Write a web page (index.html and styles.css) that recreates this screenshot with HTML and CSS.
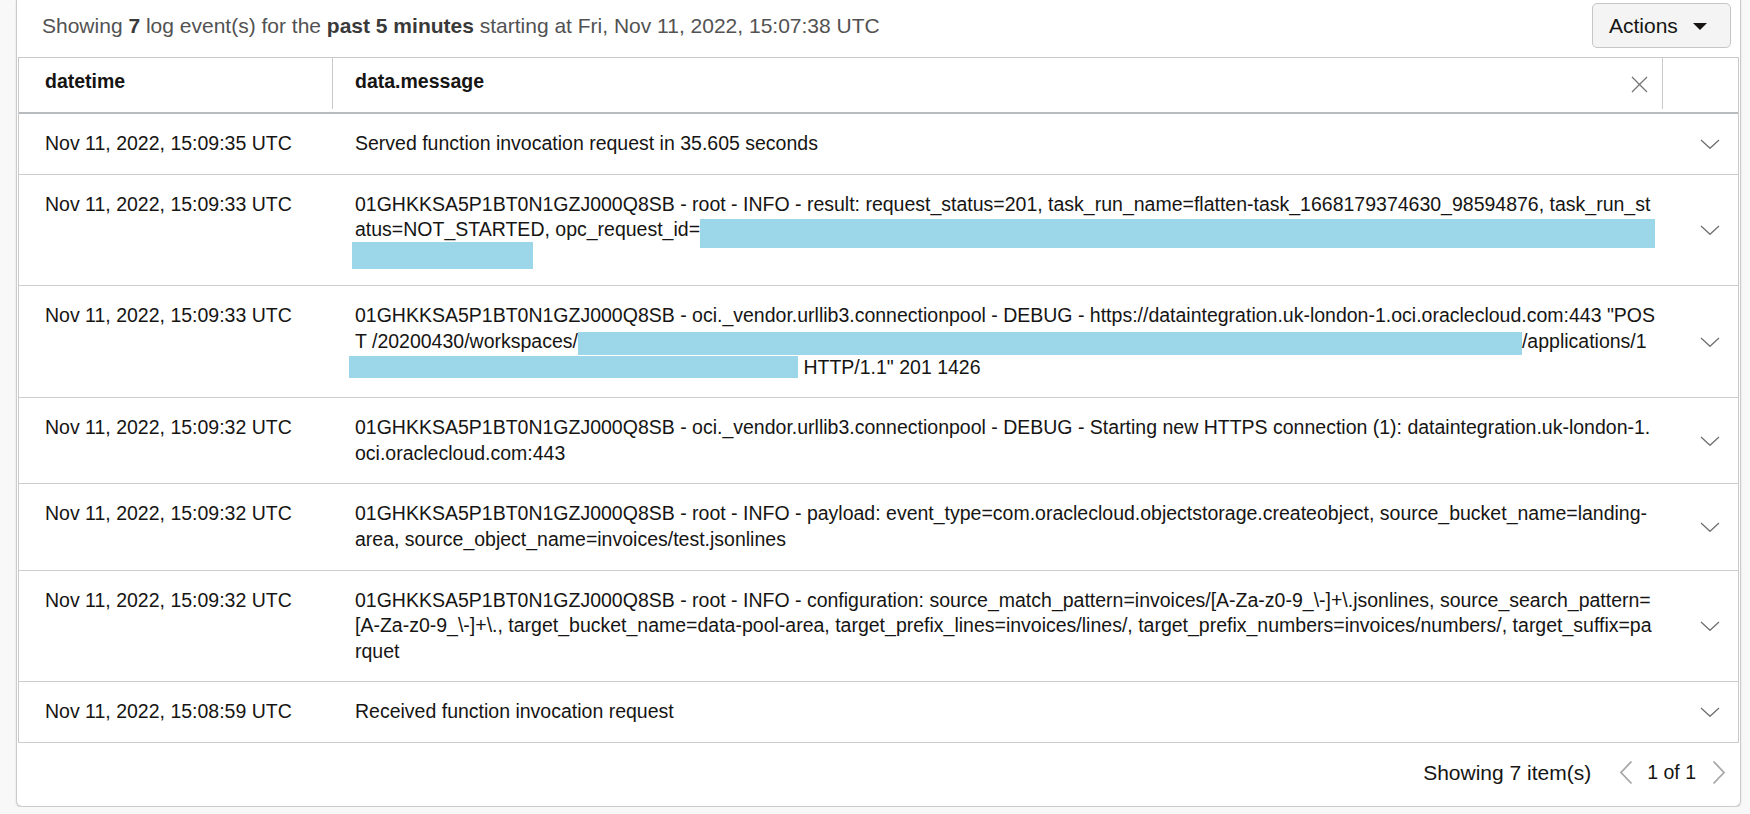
FILE: index.html
```html
<!DOCTYPE html>
<html lang="en">
<head>
<meta charset="utf-8">
<title>Log events</title>
<link rel="stylesheet" href="styles.css">
</head>
<body>
<div class="panel">
  <div class="toolbar">
    <p class="summary">Showing <b>7</b> log event(s) for the <b>past 5 minutes</b> starting at Fri, Nov 11, 2022, 15:07:38 UTC</p>
    <button class="actions" type="button"><span>Actions</span><svg class="caret" viewBox="0 0 14 7" width="14" height="7"><path d="M0 0H14L7 7Z"/></svg></button>
  </div>
  <div class="table">
    <div class="row head">
      <div class="cell th date">datetime</div>
      <div class="cell th msg"><span>data.message</span><svg class="clear" viewBox="0 0 17 17" width="17" height="17"><path d="M1 1L16 16M16 1L1 16"/></svg></div>
      <div class="cell th exp"></div>
    </div>
    <div class="row">
      <div class="cell date">Nov 11, 2022, 15:09:35 UTC</div>
      <div class="cell msg">Served function invocation request in 35.605 seconds</div>
      <div class="cell exp"><svg class="chev" viewBox="0 0 20 10" width="20" height="10"><path d="M1 1L10 9.3L19 1"/></svg></div>
    </div>
    <div class="row">
      <div class="cell date">Nov 11, 2022, 15:09:33 UTC</div>
      <div class="cell msg">01GHKKSA5P1BT0N1GZJ000Q8SB - root - INFO - result: request_status=201, task_run_name=flatten-task_1668179374630_98594876, task_run_status=NOT_STARTED, opc_request_id=<span class="redact r1"></span><span class="redact r2"></span></div>
      <div class="cell exp"><svg class="chev" viewBox="0 0 20 10" width="20" height="10"><path d="M1 1L10 9.3L19 1"/></svg></div>
    </div>
    <div class="row">
      <div class="cell date">Nov 11, 2022, 15:09:33 UTC</div>
      <div class="cell msg">01GHKKSA5P1BT0N1GZJ000Q8SB - oci._vendor.urllib3.connectionpool - DEBUG - https://dataintegration.uk-london-1.oci.oraclecloud.com:443 "POST /20200430/workspaces/<span class="redact r3"></span>/applications/1<span class="redact r4"></span> HTTP/1.1" 201 1426</div>
      <div class="cell exp"><svg class="chev" viewBox="0 0 20 10" width="20" height="10"><path d="M1 1L10 9.3L19 1"/></svg></div>
    </div>
    <div class="row">
      <div class="cell date">Nov 11, 2022, 15:09:32 UTC</div>
      <div class="cell msg">01GHKKSA5P1BT0N1GZJ000Q8SB - oci._vendor.urllib3.connectionpool - DEBUG - Starting new HTTPS connection (1): dataintegration.uk-london-1.oci.oraclecloud.com:443</div>
      <div class="cell exp"><svg class="chev" viewBox="0 0 20 10" width="20" height="10"><path d="M1 1L10 9.3L19 1"/></svg></div>
    </div>
    <div class="row">
      <div class="cell date">Nov 11, 2022, 15:09:32 UTC</div>
      <div class="cell msg">01GHKKSA5P1BT0N1GZJ000Q8SB - root - INFO - payload: event_type=com.oraclecloud.objectstorage.createobject, source_bucket_name=landing-area, source_object_name=invoices/test.jsonlines</div>
      <div class="cell exp"><svg class="chev" viewBox="0 0 20 10" width="20" height="10"><path d="M1 1L10 9.3L19 1"/></svg></div>
    </div>
    <div class="row">
      <div class="cell date">Nov 11, 2022, 15:09:32 UTC</div>
      <div class="cell msg">01GHKKSA5P1BT0N1GZJ000Q8SB - root - INFO - configuration: source_match_pattern=invoices/[A-Za-z0-9_\-]+\.jsonlines, source_search_pattern=[A-Za-z0-9_\-]+\., target_bucket_name=data-pool-area, target_prefix_lines=invoices/lines/, target_prefix_numbers=invoices/numbers/, target_suffix=parquet</div>
      <div class="cell exp"><svg class="chev" viewBox="0 0 20 10" width="20" height="10"><path d="M1 1L10 9.3L19 1"/></svg></div>
    </div>
    <div class="row">
      <div class="cell date">Nov 11, 2022, 15:08:59 UTC</div>
      <div class="cell msg">Received function invocation request</div>
      <div class="cell exp"><svg class="chev" viewBox="0 0 20 10" width="20" height="10"><path d="M1 1L10 9.3L19 1"/></svg></div>
    </div>
  </div>
  <div class="footer">
    <span class="count">Showing 7 item(s)</span>
    <svg class="pg" viewBox="0 0 14 25" width="14" height="25"><path d="M12.5 1.5L2 12.5L12.5 23.5"/></svg>
    <span class="pages">1 of 1</span>
    <svg class="pg" viewBox="0 0 14 25" width="14" height="25"><path d="M1.5 1.5L12 12.5L1.5 23.5"/></svg>
  </div>
</div>
</body>
</html>
```

FILE: styles.css
```css
html, body {
  margin: 0;
  padding: 0;
}

body {
  background: #f8f8f8;
  font-family: "Liberation Sans", Arial, sans-serif;
  font-size: 19.5px;
  line-height: 25.6px;
  color: #161513;
}

.panel {
  box-sizing: border-box;
  width: 1725px;
  height: 807px;
  margin-left: 16px;
  padding: 0 1px;
  background: #fff;
  border: 1px solid #cbcbcb;
  border-top: none;
  border-radius: 0 0 6px 6px;
  box-shadow: 0 1px 2px rgba(0, 0, 0, 0.14);
  display: flex;
  flex-direction: column;
}

.toolbar {
  height: 51px;
  margin-bottom: 6px;
  padding: 0 8px 0 24px;
  display: flex;
  align-items: center;
  justify-content: space-between;
  font-size: 21px;
}

.summary {
  margin: 0;
  color: #525252;
}

.summary b {
  color: #3a3a3a;
}

.actions {
  box-sizing: border-box;
  height: 45px;
  width: 139px;
  padding: 0 0 0 16px;
  display: flex;
  align-items: center;
  gap: 15px;
  background: #f4f4f4;
  border: 1px solid #c6c6c6;
  border-radius: 5px;
  font: inherit;
  color: #161513;
}

.caret {
  fill: #161513;
  margin-top: 1px;
}

.table {
  border: 1px solid #c9c9c9;
  border-bottom: none;
}

.row {
  display: grid;
  grid-template-columns: 314px 1330px 75px;
  border-bottom: 1px solid #cdcdcd;
}

.row.head {
  padding-bottom: 3px;
  border-bottom: 2px solid #b9bcbf;
}

.cell {
  box-sizing: border-box;
}

.cell.date {
  padding: 17px 0 17px 26px;
}

.cell.msg {
  padding: 17px 6px 17px 22px;
  word-break: break-all;
}

.cell.exp {
  display: flex;
  align-items: center;
  justify-content: flex-end;
  padding-right: 18px;
}

.cell.th {
  height: 51px;
  padding-top: 10.6px;
  padding-bottom: 0;
  font-weight: bold;
}

.cell.th.date,
.cell.th.msg {
  border-right: 1px solid #c9c9c9;
}

.cell.th.msg {
  display: flex;
  justify-content: space-between;
  align-items: flex-start;
  padding-right: 14px;
}

.clear {
  margin-top: 7px;
  fill: none;
  stroke: #747474;
  stroke-width: 1.3;
}

.chev {
  fill: none;
  stroke: #707070;
  stroke-width: 1.3;
}

.redact {
  display: inline-block;
  vertical-align: top;
  background: #9bd7e8;
}

.r1 {
  width: 955px;
  height: 29px;
  margin-top: 2px;
  margin-bottom: -5.4px;
}

.r2 {
  width: 181px;
  height: 27px;
  margin-left: -3px;
  margin-top: -1px;
  margin-bottom: -0.4px;
}

.r3 {
  width: 944px;
  height: 23px;
  margin-top: 2.5px;
  margin-bottom: 0;
}

.r4 {
  width: 449px;
  height: 22px;
  margin-left: -6px;
  margin-top: 1px;
  margin-bottom: 2.6px;
}

.footer {
  flex: 1;
  display: flex;
  align-items: center;
  justify-content: flex-end;
  padding: 0 13px 3px 0;
}

.count {
  font-size: 21px;
  margin-right: 28px;
}

.pages {
  margin: 0 16px 0 14px;
}

.pg {
  fill: none;
  stroke: #a7a7a7;
  stroke-width: 1.8;
}
```
